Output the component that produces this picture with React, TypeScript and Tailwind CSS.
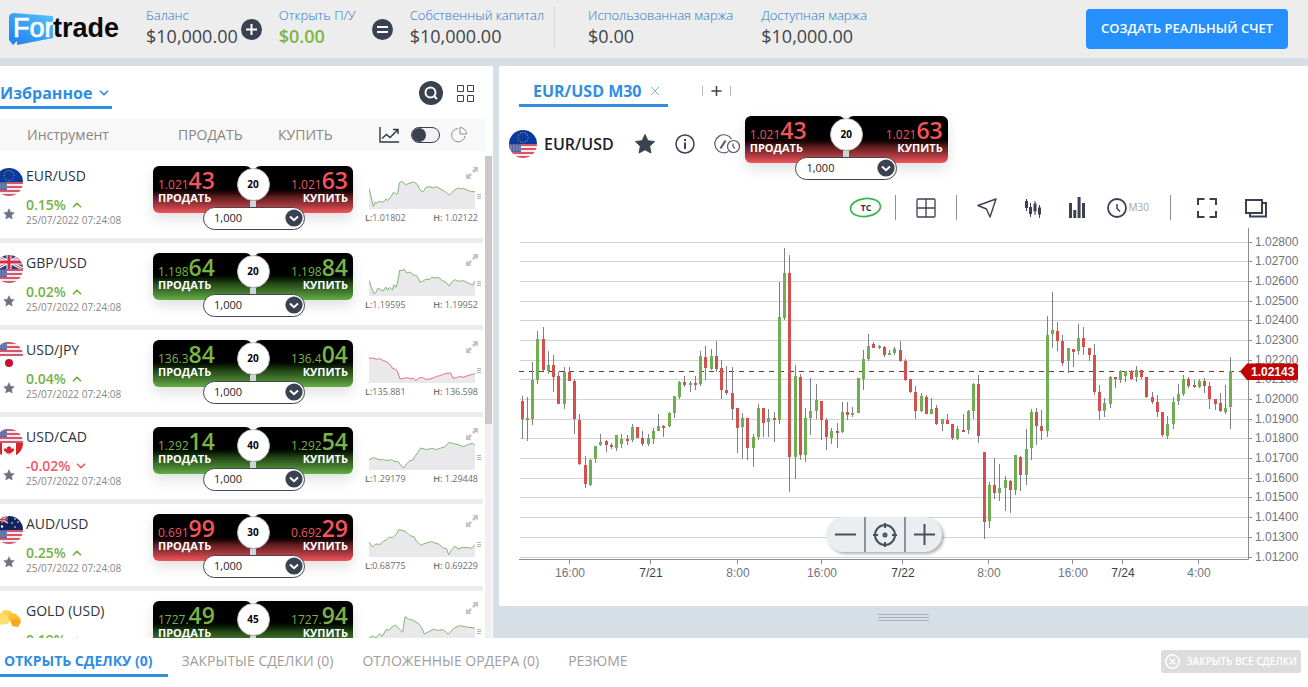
import type { ReactNode } from "react";
import { ChevronDown, ChevronUp } from "lucide-react";

type FlagCode = "eu" | "us" | "gb" | "jp" | "ca" | "au";

interface Instrument {
  name: string;
  flags?: [FlagCode, FlagCode];
  change: string;
  up: boolean;
  tone: "red" | "green";
  sell: [string, string];
  buy: [string, string];
  spread: string;
  low?: string;
  high?: string;
  updated?: string;
  line: string;
}

const instruments: Instrument[] = [
  {
    name: "EUR/USD", flags: ["eu", "us"], change: "0.15%", up: true, tone: "red",
    sell: ["1.021", "43"], buy: ["1.021", "63"], spread: "20", low: "1.01802", high: "1.02122",
    updated: "25/07/2022 07:24:08",
    line: "0,46 6,70 13,100 18,88 24,91 29,85 38,87 45,86 51,77 56,83 61,76 67,71 73,58 80,63 86,62 91,30 95,26 103,28 109,35 118,32 133,27 143,32 151,46 158,56 164,54 171,43 181,41 191,44 203,41 213,47 223,53 233,60 241,66 249,58 258,50 268,45 277,48 283,46 293,51 308,56 318,56",
  },
  {
    name: "GBP/USD", flags: ["gb", "us"], change: "0.02%", up: true, tone: "green",
    sell: ["1.198", "64"], buy: ["1.198", "84"], spread: "20", low: "1.19595", high: "1.19952",
    updated: "25/07/2022 07:24:08",
    line: "0,61 7,81 15,102 21,97 26,85 32,87 43,93 50,81 56,91 61,82 70,90 75,74 81,82 86,66 92,31 99,32 105,27 113,39 123,36 133,45 143,47 153,66 161,64 171,57 181,59 188,52 201,54 211,53 218,61 231,67 240,78 250,65 258,59 268,64 283,62 298,69 311,75 318,62",
  },
  {
    name: "USD/JPY", flags: ["us", "jp"], change: "0.04%", up: true, tone: "green",
    sell: ["136.3", "84"], buy: ["136.4", "04"], spread: "20", low: "135.881", high: "136.598",
    updated: "25/07/2022 07:24:08",
    line: "0,32 8,34 14,33 22,37 33,35 42,41 50,43 60,50 67,58 72,66 80,66 86,75 93,96 105,94 115,92 125,96 132,93 140,101 150,93 160,91 170,97 183,96 195,92 203,88 213,86 223,82 233,79 245,78 252,94 262,92 272,88 280,91 290,88 303,84 318,80",
  },
  {
    name: "USD/CAD", flags: ["us", "ca"], change: "-0.02%", up: false, tone: "green",
    sell: ["1.292", "14"], buy: ["1.292", "54"], spread: "40", low: "1.29179", high: "1.29448",
    updated: "25/07/2022 07:24:08",
    line: "0,77 13,71 21,74 38,78 43,76 53,80 68,77 78,83 88,83 98,98 105,102 113,89 123,80 131,79 138,67 148,54 155,42 173,47 188,43 200,47 213,43 225,39 233,34 240,25 253,29 268,32 283,38 298,31 311,28 318,33",
  },
  {
    name: "AUD/USD", flags: ["au", "us"], change: "0.25%", up: true, tone: "red",
    sell: ["0.691", "99"], buy: ["0.692", "29"], spread: "30", low: "0.68775", high: "0.69229",
    updated: "25/07/2022 07:24:08",
    line: "0,63 11,78 20,69 33,70 43,61 53,56 61,48 71,50 81,41 89,26 100,28 111,32 123,44 135,47 143,61 155,73 163,69 178,64 188,62 198,66 211,70 221,80 233,83 239,102 248,86 258,76 268,84 283,79 298,80 308,82 318,70",
  },
  {
    name: "GOLD (USD)", change: "0.19%", up: true, tone: "green",
    sell: ["1727.", "49"], buy: ["1727.", "94"], spread: "45",
    line: "0,90 11,84 21,90 31,77 40,85 51,65 61,66 69,57 80,51 88,60 101,73 108,26 118,33 133,37 148,46 158,59 166,78 183,69 193,64 208,67 223,65 238,79 253,62 271,53 293,57 318,60",
  },
];

// [high, body top, body bottom, low, rising], measured down the chart in thirds of a unit
const candles: [number, number, number, number, 0 | 1][] = [
  [498, 513, 567, 626, 0], [500, 564, 570, 633, 1], [395, 450, 567, 586, 1], [302, 327, 450, 461, 1],
  [292, 327, 419, 422, 0], [364, 405, 422, 432, 1], [376, 405, 440, 487, 0], [425, 437, 521, 521, 0],
  [412, 425, 521, 538, 1], [412, 427, 453, 453, 0], [446, 453, 567, 612, 0], [553, 570, 701, 706, 0],
  [679, 705, 762, 774, 0], [687, 689, 765, 767, 1], [648, 648, 688, 700, 1], [611, 636, 644, 648, 1],
  [629, 633, 644, 666, 0], [640, 645, 650, 657, 0], [615, 615, 653, 662, 1], [612, 627, 641, 655, 1],
  [616, 627, 632, 646, 0], [583, 591, 629, 637, 1], [591, 591, 624, 624, 0], [602, 624, 641, 649, 0],
  [612, 624, 641, 649, 1], [593, 603, 627, 641, 1], [553, 588, 602, 604, 1], [584, 588, 594, 622, 0],
  [545, 549, 588, 591, 1], [498, 498, 549, 565, 1], [452, 456, 500, 506, 1], [437, 457, 465, 472, 0],
  [453, 459, 465, 486, 1], [439, 459, 465, 480, 0], [364, 378, 461, 467, 1], [347, 381, 413, 449, 0],
  [357, 378, 416, 420, 1], [334, 378, 416, 426, 0], [389, 414, 479, 506, 0], [409, 480, 489, 496, 0],
  [412, 489, 536, 570, 0], [534, 534, 594, 670, 0], [549, 564, 591, 687, 1], [564, 564, 653, 691, 0],
  [612, 621, 653, 712, 1], [521, 534, 620, 629, 1], [534, 534, 579, 620, 0], [536, 564, 576, 620, 1],
  [545, 564, 570, 637, 0], [157, 262, 570, 582, 1], [55, 129, 263, 271, 1], [74, 129, 681, 787, 0],
  [406, 438, 681, 747, 1], [433, 441, 675, 690, 0], [533, 564, 675, 697, 1], [443, 543, 564, 615, 1],
  [461, 511, 543, 566, 1], [513, 513, 570, 629, 0], [565, 570, 621, 661, 0], [595, 602, 624, 641, 1],
  [579, 602, 608, 655, 0], [517, 546, 606, 610, 1], [515, 546, 555, 570, 0], [530, 549, 555, 562, 1],
  [444, 444, 549, 549, 1], [359, 387, 447, 480, 1], [313, 348, 387, 394, 1], [335, 342, 353, 355, 0],
  [344, 349, 353, 357, 1], [347, 351, 375, 381, 0], [360, 370, 375, 375, 1], [352, 357, 369, 375, 1],
  [334, 360, 393, 395, 0], [387, 393, 450, 453, 0], [447, 447, 486, 490, 0], [467, 486, 543, 567, 0],
  [489, 498, 543, 546, 1], [494, 500, 551, 551, 0], [505, 537, 551, 553, 1], [525, 534, 581, 586, 0],
  [567, 567, 582, 604, 1], [553, 570, 582, 582, 0], [582, 582, 623, 629, 0], [589, 597, 627, 629, 1],
  [553, 600, 606, 606, 0], [540, 543, 600, 612, 1], [459, 462, 543, 566, 1], [436, 462, 618, 639, 0],
  [666, 666, 876, 926, 0], [757, 765, 873, 894, 1], [684, 765, 789, 808, 0], [702, 774, 789, 814, 1],
  [739, 750, 774, 843, 1], [750, 753, 780, 848, 0], [675, 675, 780, 796, 1], [678, 681, 735, 783, 0],
  [597, 657, 735, 766, 1], [536, 546, 654, 690, 1], [533, 546, 588, 644, 0], [540, 588, 603, 629, 0],
  [259, 315, 603, 622, 1], [187, 300, 311, 355, 1], [276, 303, 333, 363, 0], [314, 333, 399, 408, 0],
  [353, 354, 393, 430, 1], [357, 357, 366, 412, 0], [283, 324, 363, 376, 1], [292, 324, 351, 374, 0],
  [354, 354, 375, 393, 0], [343, 375, 486, 495, 0], [464, 486, 543, 571, 0], [505, 519, 543, 562, 1],
  [438, 441, 521, 534, 1], [441, 441, 446, 475, 0], [419, 423, 450, 458, 1], [424, 424, 437, 457, 1],
  [421, 424, 446, 450, 0], [409, 420, 441, 457, 1], [420, 420, 441, 446, 0], [441, 441, 501, 504, 0],
  [486, 500, 516, 521, 0], [494, 516, 546, 562, 0], [546, 546, 615, 620, 0], [559, 582, 618, 626, 1],
  [502, 516, 582, 598, 1], [463, 492, 513, 525, 1], [436, 447, 492, 497, 1], [441, 447, 468, 473, 0],
  [450, 465, 471, 475, 0], [446, 453, 471, 474, 1], [444, 454, 468, 490, 0], [457, 468, 507, 536, 0],
  [506, 508, 521, 541, 0], [488, 519, 543, 545, 0], [464, 534, 545, 552, 1], [382, 424, 530, 596, 1],
];

const timeLabels = [
  { x: 70, text: "16:00" },
  { x: 151, text: "7/21", day: true },
  { x: 238, text: "8:00" },
  { x: 322, text: "16:00" },
  { x: 403, text: "7/22", day: true },
  { x: 489, text: "8:00" },
  { x: 573, text: "16:00" },
  { x: 623, text: "7/24", day: true },
  { x: 699, text: "4:00" },
];

const tabs = ["ЗАКРЫТЫЕ СДЕЛКИ (0)", "ОТЛОЖЕННЫЕ ОРДЕРА (0)", "РЕЗЮМЕ"];

function FlagHalf({ code }: { code: FlagCode }) {
  switch (code) {
    case "us":
      return (
        <g>
          <rect width="28" height="14" fill="#f6e9ec" />
          {[0, 1, 2, 3].map((i) => (
            <rect key={i} y={i * 4} width="28" height="2" fill="#d4566a" />
          ))}
          <rect width="12" height="8" fill="#54629a" />
          {[2, 5, 8, 11].map((x) => (
            <g key={x} fill="#dfe3f2">
              <circle cx={x} cy="2" r=".6" />
              <circle cx={x} cy="4" r=".6" />
              <circle cx={x} cy="6" r=".6" />
            </g>
          ))}
        </g>
      );
    case "eu":
      return (
        <g>
          <rect width="28" height="14" fill="#0b3a9e" />
          {Array.from({ length: 12 }, (_, i) => (
            <circle
              key={i}
              cx={14 + 5 * Math.cos((i * Math.PI) / 6)}
              cy={7.5 + 5 * Math.sin((i * Math.PI) / 6)}
              r=".6"
              fill="#b0a65c"
            />
          ))}
        </g>
      );
    case "gb":
      return (
        <g>
          <rect width="28" height="14" fill="#2b3c85" />
          <path d="M0 0 28 14M28 0 0 14" stroke="#fff" strokeWidth="3" />
          <path d="M0 0 28 14M28 0 0 14" stroke="#d22f45" strokeWidth="1" />
          <path d="M14 0V14M0 7H28" stroke="#fff" strokeWidth="5" />
          <path d="M14 0V14M0 7H28" stroke="#d22f45" strokeWidth="3" />
        </g>
      );
    case "jp":
      return (
        <g>
          <rect width="28" height="14" fill="#fff" />
          <circle cx="14" cy="7" r="4" fill="#c8102e" />
        </g>
      );
    case "ca":
      return (
        <g>
          <rect width="28" height="14" fill="#fff" />
          <rect width="7" height="14" fill="#d8232a" />
          <rect x="21" width="7" height="14" fill="#d8232a" />
          <path
            d="M14 2.5l1 1.8 1.2-.5-.3 2.4 1.5-1.3.4.9 1.5-.2-.6 1.5.6.5-2.8 2 .2 1-2.4-.3V12h-.6v-1.7l-2.4.3.2-1-2.8-2 .6-.5-.6-1.5 1.5.2.4-.9 1.5 1.3-.3-2.4 1.2.5z"
            fill="#d8232a"
          />
        </g>
      );
    case "au":
      return (
        <g>
          <rect width="28" height="14" fill="#12235f" />
          <path d="M0 0 13 7M13 0 0 7M7 0V7M0 3.5H13" stroke="#e8aeb8" strokeWidth="1.6" />
          <path d="M7 0V7M0 3.5H13" stroke="#cf2f45" strokeWidth=".9" />
          <g fill="#fff">
            <circle cx="7" cy="10.5" r="1.2" />
            <circle cx="20" cy="3" r=".8" />
            <circle cx="17" cy="7" r=".8" />
            <circle cx="23" cy="6" r=".8" />
            <circle cx="20" cy="11" r=".8" />
          </g>
        </g>
      );
  }
}

function Flag({ flags }: { flags?: [FlagCode, FlagCode] }) {
  if (!flags) {
    return (
      <svg viewBox="0 0 28 28" className="size-7 shrink-0">
        <path d="M9 7l7 1 3 5-5 5-9-1-1-5z" fill="#ffd24a" />
        <path d="M3 12l7-1 6 5-3 5-10 1-3-5z" fill="#ffdf73" />
        <path d="M15 10l6 1 5 5-1 4-8 1-4-6z" fill="#fbc02d" />
        <path d="M16 17l6-2 4 4-3 5-6-1z" fill="#f6a821" />
      </svg>
    );
  }
  return (
    <svg viewBox="0 0 28 28" className="size-7 shrink-0 overflow-hidden rounded-full">
      <FlagHalf code={flags[0]} />
      <g transform="translate(0 14)">
        <FlagHalf code={flags[1]} />
      </g>
    </svg>
  );
}

function Star({ className }: { className: string }) {
  return (
    <svg viewBox="0 0 24 24" className={className} fill="currentColor">
      <path
        d="M12 1.5l3.2 6.9 7.3.9-5.4 5.1 1.4 7.5L12 18.3l-6.5 3.6 1.4-7.5L1.5 9.3l7.3-.9z"
        stroke="currentColor"
        strokeLinejoin="round"
      />
    </svg>
  );
}

function TradeBox({ item }: { item: Instrument }) {
  const fill =
    item.tone === "red"
      ? "from-black from-45% via-[#5c1c1f] via-65% to-[#f2545b] text-[#f4545a]"
      : "from-black from-40% via-[#234716] via-65% to-[#65ad46] text-[#79b543]";
  return (
    <div className="relative h-16">
      <div className="flex h-[47px] rounded-md shadow-[0_6px_14px_rgba(0,0,0,0.12)]">
        <button className={`flex-1 rounded-md rounded-tr-lg rounded-br-none bg-linear-to-b pl-[5px] text-left ${fill}`}>
          <span className="block h-[25px] whitespace-nowrap text-xs leading-[28px]">
            {item.sell[0]}
            <span className="text-[23px] font-semibold">{item.sell[1]}</span>
          </span>
          <span className="block h-[22px] text-[11px] leading-[14px] font-bold text-white">ПРОДАТЬ</span>
        </button>
        <button className={`flex-1 rounded-md rounded-tl-lg rounded-bl-none bg-linear-to-b pr-[5px] text-right ${fill}`}>
          <span className="block h-[25px] whitespace-nowrap text-xs leading-[28px]">
            {item.buy[0]}
            <span className="text-[23px] font-semibold">{item.buy[1]}</span>
          </span>
          <span className="block h-[22px] text-[11px] leading-[14px] font-bold text-white">КУПИТЬ</span>
        </button>
      </div>
      <div className="absolute inset-x-0 top-[2px] flex flex-col items-center">
        <span className="flex size-[33px] items-center justify-center rounded-full border border-[#b9bcc0] bg-white text-[10px] font-bold text-black">
          {item.spread}
        </span>
        <span className="h-[6px] w-[6px] bg-[#ccd6d6]" />
      </div>
      <label className="absolute top-[41px] left-1/4 flex h-[23px] w-[102px]">
        <select
          aria-label="Объём"
          className="h-full w-full appearance-none rounded-full border border-[#41464f] bg-white pl-[10px] text-[11px] text-[#222]"
        >
          <option>1,000</option>
        </select>
        <svg viewBox="0 0 18 18" className="pointer-events-none absolute top-[2px] right-[2px] size-[18px]">
          <circle cx="9" cy="9" r="8.6" fill="#3a4150" />
          <path d="M5 7.4l4 3.8 4-3.8" fill="none" stroke="#fff" strokeWidth="2" />
        </svg>
      </label>
    </div>
  );
}

function Sparkline({ item }: { item: Instrument }) {
  const stroke = item.name === "USD/JPY" ? "#ee6f76" : "#84b672";
  return (
    <div className="ml-3 w-[113px]">
      <div className="flex h-4 items-end justify-end">
        <svg viewBox="0 0 12 12" className="size-3 text-[#c3c4c6]" fill="currentColor">
          <path d="M6.5 0H12v5.5L10.200 3.700 8 6 6 4 8.300 1.800zM0 6.500 1.800 8.300 4 6 6 8 3.700 10.200 5.500 12H0z" />
        </svg>
      </div>
      <div className="flex items-end gap-[2px] pl-1">
        <svg viewBox="0 18 318 90" className="h-[30px] w-[106px] shrink-0">
          <polygon points={`0,108 ${item.line} 318,108`} fill="#e9e9ec" />
          <polyline points={item.line} fill="none" stroke={stroke} strokeWidth="3" strokeLinejoin="round" />
        </svg>
        <svg viewBox="0 0 5 8" className="mb-2 h-2 w-[5px] shrink-0">
          <path d="M0 1.500H4M0 3.500H4M0 5.500H4" stroke="#b4b4b6" />
        </svg>
      </div>
      {item.low && (
        <div className="mt-[2px] flex justify-between text-[9px] leading-[13px] whitespace-nowrap text-[#6e6e70]">
          <span>
            <b className="font-semibold">L:</b>
            {item.low}
          </span>
          <span>
            <b className="font-semibold">H:</b> {item.high}
          </span>
        </div>
      )}
    </div>
  );
}

function InstrumentRow({ item }: { item: Instrument }) {
  return (
    <li className="flex h-[87px] shrink-0 border-b-[5px] border-[#ececec] bg-white">
      <div className="flex w-[153px]">
        <div className="-ml-[5px] flex w-7 flex-col items-center pt-3">
          <Flag flags={item.flags} />
          <Star className="mt-3 size-3 text-[#6b7280]" />
        </div>
        <div className="ml-[3px] pt-[10px]">
          <p className="text-sm leading-5 text-[#2d3440]">{item.name}</p>
          <p
            className={
              item.up
                ? "mt-[10px] flex items-center gap-1 text-sm leading-[18px] font-semibold text-[#74b143]"
                : "mt-[10px] flex items-center gap-1 text-sm leading-[18px] font-semibold text-[#f05a62]"
            }
          >
            {item.change}
            {item.up ? <ChevronUp size={14} strokeWidth={3} /> : <ChevronDown size={14} strokeWidth={3} />}
          </p>
          {item.updated && (
            <p className="text-[10px] leading-3 whitespace-nowrap text-[#868686]">{item.updated}</p>
          )}
        </div>
      </div>
      <div className="w-[200px] pt-[10px]">
        <TradeBox item={item} />
      </div>
      <div className="pt-[7px]">
        <Sparkline item={item} />
      </div>
    </li>
  );
}

function Chart() {
  return (
    <svg viewBox="0 0 809 360" className="block w-full font-['Liberation_Sans',sans-serif] text-[12px]">
      {Array.from({ length: 17 }, (_, i) => {
        const y = Math.floor(16 + i * 19.6875) + 0.5;
        return (
          <g key={i}>
            <path d={`M21 ${y}H749`} stroke="#d2d3d4" />
            <path d={`M749 ${y}H753`} stroke="#8a8d92" />
            <text x="756" y={y + 3.5} fill="#70757d">
              {(1.028 - i * 0.001).toFixed(5)}
            </text>
          </g>
        );
      })}
      <path d="M749.500 2V333.500H20" fill="none" stroke="#8a8d92" />
      {timeLabels.map((label) => (
        <g key={label.x}>
          <path d={`M${label.x + 0.5} 334V338`} stroke="#8a8d92" />
          <text x={label.x + 1} y="351" textAnchor="middle" fill={label.day ? "#3c3f45" : "#70757d"}>
            {label.text}
          </text>
        </g>
      ))}
      <path d="M20 145.500H742" stroke="#6e3a30" strokeDasharray="5 5" />
      {candles.map(([high, top, bottom, low, up], i) => {
        const x = 11 + Math.floor(12 + i * 5.25);
        const y = (v: number) => 4 + Math.round(v / 3);
        return (
          <g key={i}>
            <rect x={x} y={y(high)} width="1" height={y(low) - y(high)} fill="#7d8087" />
            <rect x={x - 1} y={y(top)} width="3" height={y(bottom) - y(top)} fill={up ? "#6fae51" : "#d3504f"} />
          </g>
        );
      })}
      <path d="M741 145.500 748 137.500H797a2 2 0 0 1 2 2V152a2 2 0 0 1-2 2H748z" fill="#c00303" />
      <text x="752" y="150" fill="#fff" fontWeight="bold">
        1.02143
      </text>
    </svg>
  );
}

function Stat({ label, value, green }: { label: string; value: string; green?: boolean }) {
  return (
    <div className="whitespace-nowrap">
      <p className="text-[13px] leading-[17px] font-light text-[#1f76cc]">{label}</p>
      <p className={green ? "text-lg leading-6 font-semibold text-[#80b441]" : "text-lg leading-6 text-[#3f444a]"}>
        {value}
      </p>
    </div>
  );
}

function Sign({ d }: { d: string }) {
  return (
    <svg viewBox="0 0 21 21" className="size-[21px] shrink-0">
      <circle cx="10.5" cy="10.5" r="10.5" fill="#3a4150" />
      <path d={d} stroke="#fff" strokeWidth="2" />
    </svg>
  );
}

function Tool({ label, children }: { label: string; children: ReactNode }) {
  return (
    <button aria-label={label} className="flex items-center text-[#3a4150]">
      {children}
    </button>
  );
}

export default function App() {
  return (
    <div className="flex h-screen flex-col overflow-hidden bg-white font-['Open_Sans','Noto_Sans',sans-serif]">
      <header className="flex h-[66px] shrink-0 items-start border-b-8 border-[#d7dee6] bg-[#ededed] pr-5 pl-2">
        <svg viewBox="0 0 112 36" className="mt-[11px] h-9 w-[112px] shrink-0 font-['Liberation_Sans',sans-serif] text-[27px]">
          <defs>
            <linearGradient id="brand" x1="0" y1="1" x2="1" y2="0">
              <stop offset="0" stopColor="#1f7df0" />
              <stop offset="1" stopColor="#55c4fb" />
            </linearGradient>
          </defs>
          <path d="M1 6Q1 3 5 2L45 5V27L9 34V30L5 34 1 29z" fill="url(#brand)" />
          <text x="5" y="26" fill="#fff" stroke="#fff" strokeWidth=".7">
            For
          </text>
          <text x="45" y="26" fontWeight="bold" fill="#0a0a0a">
            trade
          </text>
        </svg>
        <div className="ml-[26px] flex pt-[7px]">
          <Stat label="Баланс" value="$10,000.00" />
          <div className="ml-[3px] pt-3">
            <Sign d="M10.500 5V16M5 10.500H16" />
          </div>
          <div className="ml-[17px] w-[79px]">
            <Stat label="Открыть П/У" value="$0.00" green />
          </div>
          <div className="ml-[14px] pt-3">
            <Sign d="M5 8H16M5 13H16" />
          </div>
          <div className="ml-[17px] border-r border-[#d5d7dc] pr-[10px]">
            <Stat label="Собственный капитал" value="$10,000.00" />
          </div>
          <div className="ml-[33px]">
            <Stat label="Использованная маржа" value="$0.00" />
          </div>
          <div className="ml-7">
            <Stat label="Доступная маржа" value="$10,000.00" />
          </div>
        </div>
        <button className="mt-[9px] ml-auto h-10 rounded bg-[#2590fb] px-[15px] text-[13px] font-semibold whitespace-nowrap text-white">
          СОЗДАТЬ РЕАЛЬНЫЙ СЧЕТ
        </button>
      </header>

      <main className="flex min-h-0 flex-1">
        <section className="flex w-[499px] shrink-0 flex-col border-r-[6px] border-[#d6dee6]">
          <div className="flex h-[53px] items-start justify-between pr-[19px]">
            <button className="mt-[15px] flex h-7 items-center gap-[5px] border-b-[3px] border-[#2f8de4] pr-px pb-[2px] text-base font-bold text-[#2f8de4]">
              Избранное
              <ChevronDown size={14} strokeWidth={3} />
            </button>
            <div className="flex items-center gap-[14px] pt-[15px]">
              <button aria-label="Поиск">
                <svg viewBox="0 0 24 24" className="size-6">
                  <circle cx="12" cy="12" r="12" fill="#3a4150" />
                  <circle cx="11.500" cy="11.500" r="5" fill="none" stroke="#fff" strokeWidth="2" />
                  <path d="M14.500 14.500 18 18" stroke="#fff" strokeWidth="2" />
                </svg>
              </button>
              <button aria-label="Плитка">
                <svg viewBox="0 0 17 17" className="size-[17px]" fill="none" stroke="#3a4150">
                  <path d="M.5 .5h6v6h-6zM10.500 .5h6v6h-6zM.5 10.500h6v6h-6zM10.500 10.500h6v6h-6z" />
                </svg>
              </button>
            </div>
          </div>

          <div className="mr-[7px] flex h-8 shrink-0 items-center bg-[#f8f8f8] text-sm text-[#8a8581]">
            <span className="w-[178px] pl-[27px]">Инструмент</span>
            <span className="w-[100px]">ПРОДАТЬ</span>
            <span className="w-[101px]">КУПИТЬ</span>
            <svg viewBox="0 0 20 16" className="h-4 w-5" fill="none" stroke="#30343c" strokeWidth="1.400">
              <path d="M1 0V15H20M3 11.500 7.500 7.500 11 10.500 19 2.500M14 2.500H19V7" />
            </svg>
            <input
              type="checkbox"
              role="switch"
              aria-label="Вид графика"
              className="ml-3 h-4 w-[29px] appearance-none rounded-full border border-[#3a4150] bg-[#f1f1f3] before:block before:size-[14px] before:rounded-full before:bg-[#3a4150] before:content-['']"
            />
            <svg viewBox="0 0 16 16" className="ml-[11px] size-4" fill="none" stroke="#8f9094">
              <path d="M7 1.500A6.700 6.700 0 1 0 14 9M9 .5V7H15.500A6.500 6.500 0 0 0 9 .5z" />
            </svg>
          </div>

          <div className="flex min-h-0 flex-1 justify-between pt-[5px] pr-[1px]">
            <ul className="flex w-[483px] flex-col overflow-hidden">
              {instruments.map((item) => (
                <InstrumentRow key={item.name} item={item} />
              ))}
            </ul>
            <div className="w-[7px] bg-[#f0f0f0]">
              <div className="h-[268px] bg-[#c9c9c9]" />
            </div>
          </div>
        </section>

        <section className="flex min-w-0 flex-1 flex-col bg-[#d6dee6]">
          <div className="flex-1 bg-white">
            <div className="flex h-[41px] items-end pl-5">
              <div className="flex h-[30px] items-center border-b-[3px] border-[#2f8de4] pr-2 pl-[14px]">
                <span className="text-base font-bold whitespace-nowrap text-[#2f8de4]">EUR/USD M30</span>
                <button aria-label="Закрыть вкладку" className="ml-2">
                  <svg viewBox="0 0 10 10" className="size-[10px]" stroke="#7fb6ea">
                    <path d="M1 1 9 9M9 1 1 9" />
                  </svg>
                </button>
              </div>
              <button aria-label="Новая вкладка" className="mb-[10px] ml-[34px]">
                <svg viewBox="0 0 29 12" className="h-3 w-[29px]">
                  <path d="M.5 1V11M28.500 1V11" stroke="#b5b5b5" />
                  <path d="M14.500 1V11M9.500 6H19.500" stroke="#3c4048" strokeWidth="1.500" />
                </svg>
              </button>
            </div>

            <div className="flex h-[73px] items-start pt-[9px] pl-[10px]">
              <div className="flex h-14 items-center">
                <Flag flags={["eu", "us"]} />
                <h1 className="ml-[7px] text-base font-semibold text-[#1f2126]">EUR/USD</h1>
                <button aria-label="В избранное" className="ml-5">
                  <Star className="size-[22px] text-[#3a4150]" />
                </button>
                <button aria-label="Информация" className="ml-[19px]">
                  <svg viewBox="0 0 20 20" className="size-5" fill="none" stroke="#3a4150" strokeWidth="2">
                    <circle cx="10" cy="10" r="9" strokeWidth="1.500" />
                    <path d="M10 8.500V15M10 5V7" />
                  </svg>
                </button>
                <button aria-label="Отложенный ордер" className="ml-[19px]">
                  <svg viewBox="0 0 27 20" className="h-5 w-[27px]" fill="none" stroke="#555a64" strokeWidth="1.200">
                    <path d="M17.500 5A9 9 0 1 0 14.500 17.500" />
                    <circle cx="19.500" cy="12.500" r="6" />
                    <path d="M19 9.500V12.500L21 14.500" />
                    <path d="M6.500 14.500 11.500 6.500" strokeWidth="2" />
                  </svg>
                </button>
              </div>
              <div className="ml-1 w-[203px]">
                <TradeBox item={instruments[0]} />
              </div>
            </div>

            <div className="mt-[15px] flex h-[25px] items-center justify-end pr-[41px]">
              <Tool label="Trading Central">
                <svg viewBox="0 0 33 21" className="h-[21px] w-[33px]">
                  <ellipse cx="16.500" cy="10.500" rx="15" ry="9" transform="rotate(-6 16.500 10.500)" fill="none" stroke="#3ab54a" strokeWidth="1.700" />
                  <text x="17" y="14" textAnchor="middle" fontSize="9" fontWeight="bold" fill="#3a3a3a">
                    TC
                  </text>
                </svg>
              </Tool>
              <span className="ml-[13px] h-[25px] w-px bg-[#8b8e94]" />
              <div className="ml-5">
                <Tool label="Сетка">
                  <svg viewBox="0 0 20 20" className="size-5" fill="none" stroke="currentColor" strokeWidth="1.300">
                    <rect x="1" y="1" width="18" height="18" rx="1" />
                    <path d="M10 1V19M1 10H19" />
                  </svg>
                </Tool>
              </div>
              <span className="ml-5 h-[25px] w-px bg-[#8b8e94]" />
              <div className="ml-5">
                <Tool label="Рисование">
                  <svg viewBox="0 0 20 20" className="size-5" fill="none" stroke="currentColor" strokeWidth="1.400" strokeLinejoin="round">
                    <path d="M19 1 1 7.500 9.500 11 13 19z" />
                  </svg>
                </Tool>
              </div>
              <div className="ml-7">
                <Tool label="Тип графика">
                  <svg viewBox="0 0 16 20" className="h-5 w-4" fill="currentColor" stroke="currentColor">
                    <path d="M1.500 1V13M5.500 5V19M10 3V17M14.500 7V20" strokeWidth="1" />
                    <path d="M0 3h3v7H0zM4 9h3v7H4zM8.500 5.500h3v8h-3zM13 9.500h3v7h-3z" stroke="none" />
                  </svg>
                </Tool>
              </div>
              <div className="ml-7">
                <Tool label="Индикаторы">
                  <svg viewBox="0 0 16 21" className="h-[21px] w-4" fill="currentColor">
                    <path d="M0 6h3v15H0zM4.300 13h3v8h-3zM8.600 0h3v21h-3zM13 6h3v15h-3z" />
                  </svg>
                </Tool>
              </div>
              <div className="ml-[22px]">
                <Tool label="Период">
                  <svg viewBox="0 0 20 20" className="size-5" fill="none" stroke="currentColor">
                    <circle cx="10" cy="10" r="9" strokeWidth="1.800" />
                    <path d="M10 6V10.500L13 13.500" strokeWidth="1.500" />
                  </svg>
                  <span className="ml-[2px] text-[10px] text-[#a3a3a3]">M30</span>
                </Tool>
              </div>
              <span className="ml-[21px] h-[25px] w-px bg-[#8b8e94]" />
              <div className="ml-[26px]">
                <Tool label="Во весь экран">
                  <svg viewBox="0 0 20 20" className="size-5" fill="none" stroke="currentColor" strokeWidth="2">
                    <path d="M1 7V1H7.500M12.500 1H19V7M19 13V19H12.500M7.500 19H1V13" />
                  </svg>
                </Tool>
              </div>
              <div className="ml-7">
                <Tool label="Отдельное окно">
                  <svg viewBox="0 0 22 20" className="h-5 w-[22px]" fill="none" stroke="currentColor" strokeWidth="2">
                    <path d="M1 2H17V15H1zM17 5H21V18.500H5V15" />
                  </svg>
                </Tool>
              </div>
            </div>

            <div className="relative mt-[6px]">
              <Chart />
              <div className="absolute right-[59px] bottom-[34px] left-5 flex justify-center">
                <div className="flex h-[35px] divide-x-2 divide-[#8f949c] rounded-full bg-[#ebeef1] shadow-[2px_2px_3px_rgba(0,0,0,0.3)]">
                  <button aria-label="Уменьшить" className="flex w-10 items-center justify-center">
                    <svg viewBox="0 0 21 21" className="size-[21px]" stroke="#4a4f5a" strokeWidth="2">
                      <path d="M0 10.500H21" />
                    </svg>
                  </button>
                  <button aria-label="По центру" className="flex w-10 items-center justify-center">
                    <svg viewBox="0 0 24 24" className="size-6" fill="none" stroke="#4a4f5a" strokeWidth="2">
                      <circle cx="12" cy="12" r="10" />
                      <circle cx="12" cy="12" r="1.500" />
                      <path d="M12 0V5M12 19V24M0 12H5M19 12H24" />
                    </svg>
                  </button>
                  <button aria-label="Увеличить" className="flex w-9 items-center justify-center">
                    <svg viewBox="0 0 21 21" className="size-[21px]" stroke="#4a4f5a" strokeWidth="2">
                      <path d="M0 10.500H21M10.500 0V21" />
                    </svg>
                  </button>
                </div>
              </div>
            </div>
          </div>
          <div className="flex h-8 shrink-0 justify-center pt-2">
            <svg viewBox="0 0 51 7" className="h-[7px] w-[51px]">
              <path d="M0 .5H51M0 3.500H51M0 6.500H51" stroke="#a9b0b8" />
            </svg>
          </div>
        </section>
      </main>

      <footer className="flex h-[49px] shrink-0 items-start pr-[7px]">
        <nav className="flex gap-[29px] text-sm whitespace-nowrap text-[#9e9e9e]">
          <a href="#open" className="-mr-[15px] flex h-[39px] items-center border-b-[3px] border-[#2f8de4] pt-[10px] pr-[15px] pl-1 font-bold text-[#2f8de4]">
            ОТКРЫТЬ СДЕЛКУ (0)
          </a>
          {tabs.map((tab) => (
            <a key={tab} href="#tab" className="flex h-9 items-center pt-[10px]">
              {tab}
            </a>
          ))}
        </nav>
        <button className="mt-3 ml-auto flex h-[23px] items-center gap-[6px] rounded-[3px] bg-[#dcdcdc] px-1 text-[10px] font-semibold whitespace-nowrap text-white">
          <svg viewBox="0 0 15 15" className="size-[15px]" fill="none" stroke="#fff" strokeWidth="1.500">
            <circle cx="7.500" cy="7.500" r="6.700" />
            <path d="M5 5 10 10M10 5 5 10" />
          </svg>
          ЗАКРЫТЬ ВСЕ СДЕЛКИ
        </button>
      </footer>
    </div>
  );
}
